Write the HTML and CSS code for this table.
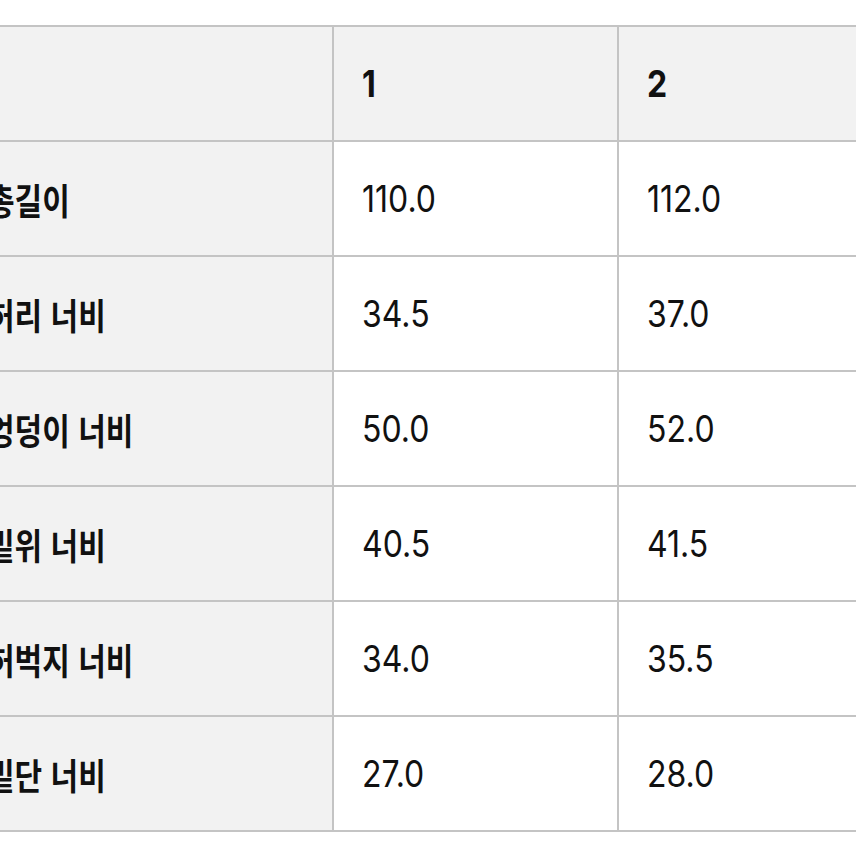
FILE: index.html
```html
<!DOCTYPE html>
<html lang="ko">
<head>
<meta charset="utf-8">
<link rel="stylesheet" href="styles.css">
</head>
<body>
<div class="viewport">
  <table class="size-table">
    <colgroup>
      <col class="col-label">
      <col class="col-size">
      <col class="col-size">
    </colgroup>
    <thead>
      <tr>
        <th class="label"></th>
        <th><span class="t">1</span></th>
        <th><span class="t">2</span></th>
      </tr>
    </thead>
    <tbody>
      <tr><th class="label"><span class="t">총길이</span></th><td><span class="t">110.0</span></td><td><span class="t">112.0</span></td></tr>
      <tr><th class="label"><span class="t">허리 너비</span></th><td><span class="t">34.5</span></td><td><span class="t">37.0</span></td></tr>
      <tr><th class="label"><span class="t">엉덩이 너비</span></th><td><span class="t">50.0</span></td><td><span class="t">52.0</span></td></tr>
      <tr><th class="label"><span class="t">밑위 너비</span></th><td><span class="t">40.5</span></td><td><span class="t">41.5</span></td></tr>
      <tr><th class="label"><span class="t">허벅지 너비</span></th><td><span class="t">34.0</span></td><td><span class="t">35.5</span></td></tr>
      <tr><th class="label"><span class="t">밑단 너비</span></th><td><span class="t">27.0</span></td><td><span class="t">28.0</span></td></tr>
    </tbody>
  </table>
</div>
</body>
</html>
```

FILE: styles.css
```css
html, body {
  margin: 0;
  padding: 0;
  background: #ffffff;
}

.viewport {
  width: 856px;
  height: 856px;
  overflow: hidden;
  padding-top: 25px;
  box-sizing: border-box;
}

.size-table {
  margin-left: -43px;
  border-collapse: collapse;
  table-layout: fixed;
  width: 944px;
  font-family: Inter, "Noto Sans CJK KR", sans-serif;
  font-size: 32px;
  color: #111111;
}

.col-label { width: 375px; }
.col-size { width: 285px; }

.size-table th,
.size-table td {
  height: 113px;
  padding: 0 0 0 28px;
  border: 2px solid #c4c4c4;
  text-align: left;
  vertical-align: middle;
  white-space: nowrap;
}

.size-table th {
  font-weight: 700;
}

.size-table td {
  font-weight: 400;
  background: #ffffff;
}

.size-table thead th,
.size-table th.label {
  background: #f2f2f2;
}

.size-table .label {
  font-family: "Noto Sans CJK KR", sans-serif;
  font-size: 30px;
}

.t {
  display: inline-block;
  transform: scaleY(1.15);
}

.label .t {
  transform: scaleY(1.2);
}
```
